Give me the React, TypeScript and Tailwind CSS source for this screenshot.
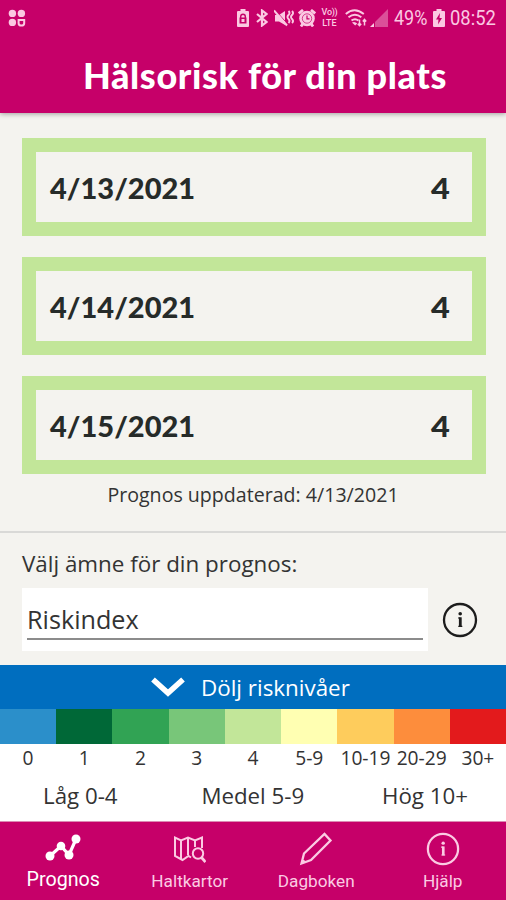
import type { ReactNode } from 'react'

const FORECAST = [
  { date: '4/13/2021', risk: 4 },
  { date: '4/14/2021', risk: 4 },
  { date: '4/15/2021', risk: 4 },
]

const LEVELS = [
  { label: '0', color: 'bg-[#2b8fca]' },
  { label: '1', color: 'bg-[#006837]' },
  { label: '2', color: 'bg-[#31a354]' },
  { label: '3', color: 'bg-[#78c679]' },
  { label: '4', color: 'bg-[#c2e699]' },
  { label: '5-9', color: 'bg-[#ffffb2]' },
  { label: '10-19', color: 'bg-[#fecc5c]' },
  { label: '20-29', color: 'bg-[#fd8d3c]' },
  { label: '30+', color: 'bg-[#e31a1c]' },
]

function InfoIcon({ size, ring }: { size: number; ring: number }) {
  return (
    <svg width={size} height={size} viewBox="0 0 36 36" fill="none" stroke="currentColor">
      <circle cx="18" cy="18" r="16" strokeWidth={ring} />
      <path d="M18.300 15.300v9.500" strokeWidth="2.800" />
      <path d="M16 16h2.500M16.300 24.300h4" strokeWidth="1.200" />
      <circle cx="18.200" cy="11.800" r="1.800" fill="currentColor" stroke="none" />
    </svg>
  )
}

function StatusBar() {
  return (
    <div className="flex h-[35px] items-center pl-[8px] font-[Roboto,sans-serif] text-[#fbc9e2] *:shrink-0">
      <svg width="18" height="18" viewBox="0 0 18 18" fill="currentColor">
        <circle cx="4.400" cy="4.400" r="3.700" />
        <circle cx="13.400" cy="4.400" r="3.700" />
        <circle cx="4.400" cy="13.400" r="3.700" />
        <path d="M10.600 11h5.600v3.200q0 2.400-2.800 2.400t-2.800-2.400z" fill="none" stroke="currentColor" strokeWidth="2" />
      </svg>
      <svg className="ml-[210px]" width="14" height="18" viewBox="0 0 14 18">
        <path d="M4.500 0h5v2H12q1 0 1 1v14q0 1-1 1H2q-1 0-1-1V3q0-1 1-1h2.500z" fill="currentColor" />
        <path d="M4.700 9V7.500q0-2.300 2.300-2.300t2.300 2.300V9" fill="none" stroke="#c60069" strokeWidth="1.400" />
        <path d="M3.500 8.500h7v6h-7z" fill="#c60069" />
        <path d="M5.500 10h3v3h-3z" fill="currentColor" />
      </svg>
      <svg className="ml-[6px]" width="12" height="18" viewBox="0 0 12 18" fill="none" stroke="currentColor" strokeWidth="2.200">
        <path d="M1 5l9.500 8L6 16.500v-15L10.500 5 1 13" />
      </svg>
      <svg className="ml-[6px]" width="20" height="18" viewBox="0 0 20 18">
        <path d="M1 6h4l6-4v14l-6-3.500H1z" fill="currentColor" />
        <path d="M1.500 1.500l13 14.500" stroke="#c60069" strokeWidth="1" />
        <path d="M0 1.500L13 16.500" stroke="currentColor" strokeWidth="2" />
        <path d="M14.500 2q2 2 0 4t0 4 0 4M18 2q2 2 0 4t0 4 0 4" fill="none" stroke="currentColor" strokeWidth="1.900" />
      </svg>
      <svg className="ml-[4px]" width="18" height="18" viewBox="0 0 18 18">
        <circle cx="9" cy="9.500" r="7.800" fill="currentColor" />
        <path d="M.8 4.500L5 1M17.200 4.500L13 1M3 17.500l2-3M15 17.500l-2-3" stroke="currentColor" strokeWidth="2.800" />
        <circle cx="9" cy="9.500" r="4.700" fill="none" stroke="#c60069" strokeWidth=".7" />
        <path d="M9 6.500v3.300h2.500" fill="none" stroke="#c60069" strokeWidth="1.200" />
      </svg>
      <div className="ml-[4px] flex w-[19px] flex-col items-center text-[9px] leading-[11px] font-medium">
        <span className="tracking-[-0.3px]">Vo))</span>
        <span>LTE</span>
      </div>
      <svg className="ml-[6px]" width="23" height="18" viewBox="0 0 23 18" fill="none" stroke="currentColor" strokeWidth="1.900">
        <path d="M.8 5q8.700-7.500 18 0M3.500 8.300q6.500-5.300 12.800 0M6.500 11.500q3.500-2.700 7 0" />
        <path d="M7 13.500l3.200 3 2-2q-2.500-2.500-5.200-1z" fill="currentColor" stroke="none" />
        <path d="M14.500 10.500v6M12.800 14.700l1.700 2 1.700-2M19.500 16.500v-6M17.800 12.500l1.700-2 1.700 2" strokeWidth="1.500" />
      </svg>
      <svg className="ml-[2px]" width="19" height="18" viewBox="0 0 19 18" fill="currentColor">
        <path d="M18 0v18H5V13z" opacity=".4" />
        <path d="M4 14v4H0z" />
      </svg>
      <span className="ml-[5px] w-[34px] origin-left scale-x-[0.9] text-[20px]">49%</span>
      <svg className="ml-[4px]" width="14" height="18" viewBox="0 0 14 18">
        <path d="M4.500 0h5v2H12q1 0 1 1v14q0 1-1 1H2q-1 0-1-1V3q0-1 1-1h2.500z" fill="currentColor" />
        <path d="M8 4L4 10.500h2.500L6 15.500l4-6.500H7.500z" fill="#c60069" />
      </svg>
      <span className="ml-[4px] w-[46px] origin-left scale-x-[0.92] text-[20px]">08:52</span>
    </div>
  )
}

function NavItem({ label, active, children }: { label: string; active?: boolean; children: ReactNode }) {
  return (
    <div className={`flex flex-1 flex-col items-center pt-[10px] ${active ? 'text-white' : 'text-[#fbcbe3]'}`}>
      <div className="flex h-[34px] items-center justify-center">{children}</div>
      <span className={`leading-[26px] ${active ? 'mt-px text-[19.700px]' : 'mt-[2px] text-[17.200px]'}`}>
        {label}
      </span>
    </div>
  )
}

export default function App() {
  return (
    <div className="flex h-[900px] w-[506px] flex-col overflow-hidden bg-[#f4f3ef] font-['Open_Sans',sans-serif] text-[#333]">
      <header className="relative h-[113px] shrink-0 bg-[#c60069] shadow-[0_1px_5px_rgba(0,0,0,0.35)]">
        <StatusBar />
        <h1 className="ml-[83px] font-[Lato,sans-serif] text-[36px] leading-[80px] font-black tracking-[0.62px] whitespace-nowrap text-white">
          Hälsorisk för din plats
        </h1>
      </header>

      <main className="flex flex-col gap-[21px] pt-[25px] pr-[20px] pl-[22px]">
        {FORECAST.map((f) => (
          <div
            key={f.date}
            className="flex h-[98px] items-center justify-between border-[14px] border-[#c2e699] pt-[2px] pr-[22px] pl-[14px] font-[Lato,sans-serif] text-[29px] font-black text-[#262b29]"
          >
            <span>{f.date}</span>
            <span className="origin-right scale-x-[1.12]">{f.risk}</span>
          </div>
        ))}
      </main>
      <p className="mt-[7px] text-center text-[19.600px] leading-[28px]">Prognos uppdaterad: 4/13/2021</p>

      {/* Val av ämne */}
      <section className="mt-[22px] h-[134px] shrink-0 border-t-2 border-[#d9d9d7] px-[22px]">
        <p className="mt-[15px] text-[22.400px] leading-[32px]">Välj ämne för din prognos:</p>
        <div className="mt-[8px] flex items-center">
          <div className="h-[63px] w-[406px] bg-white px-[5px] pt-[12px]">
            <div className="h-[40px] border-b-2 border-[#8c8c8c] text-[25.200px] leading-[38px]">Riskindex</div>
          </div>
          <div className="ml-[14px] text-[#1c1c1c]">
            <InfoIcon size={36} ring={2.3} />
          </div>
        </div>
      </section>

      <button className="flex h-[44px] shrink-0 items-center bg-[#006ebf] pl-[151px] text-[22.400px] text-white">
        <svg width="34" height="20" viewBox="0 0 34 20" fill="none" stroke="currentColor" strokeWidth="5.500">
          <path d="M2 2.500l15 13.500 15-13.500" />
        </svg>
        <span className="mt-px ml-[16px]">Dölj risknivåer</span>
      </button>

      {/* Risknivåer */}
      <section className="h-[112px] shrink-0 bg-white">
        <div className="grid grid-cols-9">
          {LEVELS.map((l) => (
            <div key={l.label} className="text-center text-[19.200px] leading-[28px] whitespace-nowrap">
              <div className={`h-[35px] ${l.color}`} />
              {l.label}
            </div>
          ))}
        </div>
        <div className="mt-[8px] flex justify-between pr-[38px] pl-[43px] text-[22.300px] leading-[32px]">
          <span>Låg 0-4</span>
          <span className="pl-[6px]">Medel 5-9</span>
          <span>Hög 10+</span>
        </div>
      </section>

      <nav className="flex h-[79px] shrink-0 border-t border-[#dc8bb4] bg-[#c60069] font-[Roboto,sans-serif]">
        <NavItem label="Prognos" active>
          <svg className="relative -top-px" width="36" height="28" viewBox="0 0 36 28" fill="currentColor">
            <path d="M5 22L16 12l8 9 7-16" fill="none" stroke="currentColor" strokeWidth="3.200" />
            <circle cx="5" cy="22" r="4.500" />
            <circle cx="16" cy="12" r="4.300" />
            <circle cx="24" cy="21" r="4.500" />
            <circle cx="31" cy="5" r="4.500" />
          </svg>
        </NavItem>
        <NavItem label="Haltkartor">
          <svg width="33" height="28" viewBox="0 0 33 28" fill="none" stroke="currentColor" strokeWidth="2">
            <path d="M18 22.500l-2.500-1.500-6 4-7.500-4V2.500l6 3 7-3 7 3 7-3V13" />
            <path d="M8 6v18M15 3v17M22 6v6" />
            <circle cx="25" cy="18.500" r="5.200" />
            <path d="M28.500 22.500l4 4.500" strokeWidth="2.800" />
          </svg>
        </NavItem>
        <NavItem label="Dagboken">
          <svg width="34" height="34" viewBox="0 0 34 34" fill="none" stroke="currentColor" strokeWidth="2.300">
            <path d="M2.500 31.500L5 21.500 25.500 2l6 6.500L12 28zM3.500 28.500l3 2" />
          </svg>
        </NavItem>
        <NavItem label="Hjälp">
          <InfoIcon size={34} ring={2.4} />
        </NavItem>
      </nav>
    </div>
  )
}
